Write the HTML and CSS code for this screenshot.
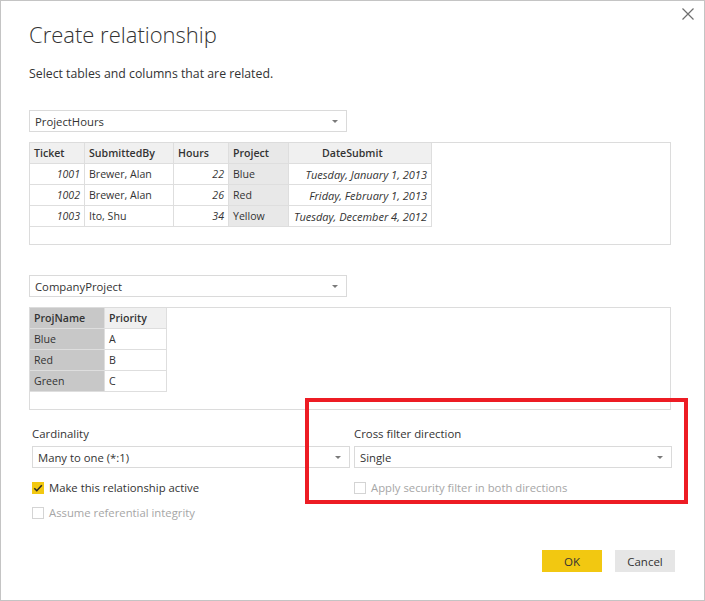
FILE: index.html
```html
<!DOCTYPE html>
<html lang="en">
<head>
<meta charset="utf-8">
<title>Create relationship</title>
<link rel="stylesheet" href="styles.css">
</head>
<body>
<div class="dialog">
  <button class="close" aria-label="Close">
    <svg width="12" height="12" viewBox="0 0 12 12"><path d="M0.5 0.5 L11.5 11.5 M11.5 0.5 L0.5 11.5" stroke="#6e6e6e" stroke-width="1.2" fill="none"/></svg>
  </button>
  <h1 class="title">Create relationship</h1>
  <p class="subtitle">Select tables and columns that are related.</p>

  <div class="select select-table"><span>ProjectHours</span><i class="caret"></i></div>
  <div class="panel">
    <table class="grid grid-hours">
      <colgroup><col style="width:55px"><col style="width:89px"><col style="width:55px"><col style="width:60px"><col style="width:143px"></colgroup>
      <thead>
        <tr><th>Ticket</th><th>SubmittedBy</th><th>Hours</th><th class="sel">Project</th><th class="date-h">DateSubmit</th></tr>
      </thead>
      <tbody>
        <tr><td class="num">1001</td><td>Brewer, Alan</td><td class="num">22</td><td class="sel">Blue</td><td class="num date">Tuesday, January 1, 2013</td></tr>
        <tr><td class="num">1002</td><td>Brewer, Alan</td><td class="num">26</td><td class="sel">Red</td><td class="num date">Friday, February 1, 2013</td></tr>
        <tr><td class="num">1003</td><td>Ito, Shu</td><td class="num">34</td><td class="sel">Yellow</td><td class="num date">Tuesday, December 4, 2012</td></tr>
      </tbody>
    </table>
  </div>

  <div class="select select-table second"><span>CompanyProject</span><i class="caret"></i></div>
  <div class="panel">
    <table class="grid grid-project">
      <colgroup><col style="width:75px"><col style="width:62px"></colgroup>
      <thead>
        <tr><th class="sel2">ProjName</th><th>Priority</th></tr>
      </thead>
      <tbody>
        <tr><td class="sel2">Blue</td><td>A</td></tr>
        <tr><td class="sel2">Red</td><td>B</td></tr>
        <tr><td class="sel2">Green</td><td>C</td></tr>
      </tbody>
    </table>
  </div>

  <div class="options">
    <div class="col">
      <label class="field-label">Cardinality</label>
      <div class="select"><span>Many to one (*:1)</span><i class="caret"></i></div>
      <div class="check-row">
        <span class="box checked"><svg width="12" height="12" viewBox="0 0 12 12"><path d="M2.3 6.2 L4.8 8.7 L9.8 3.2" stroke="#2b2b2b" stroke-width="1.6" fill="none"/></svg></span>
        <span class="check-label">Make this relationship active</span>
      </div>
      <div class="check-row disabled">
        <span class="box"></span>
        <span class="check-label">Assume referential integrity</span>
      </div>
    </div>
    <div class="col">
      <label class="field-label">Cross filter direction</label>
      <div class="select"><span>Single</span><i class="caret"></i></div>
      <div class="check-row disabled">
        <span class="box"></span>
        <span class="check-label">Apply security filter in both directions</span>
      </div>
    </div>
  </div>

  <div class="footer">
    <button class="btn primary">OK</button>
    <button class="btn">Cancel</button>
  </div>

  <div class="highlight"></div>
</div>
</body>
</html>
```
FILE: styles.css
```css
html, body {
  margin: 0;
  padding: 0;
  background: #ffffff;
}

body {
  font-family: "Open Sans", "Noto Sans", "Liberation Sans", sans-serif;
  color: #333333;
}

.dialog {
  position: relative;
  box-sizing: border-box;
  width: 705px;
  height: 601px;
  border: 1px solid #c4c4c4;
  padding: 0 28px;
  display: flex;
  flex-direction: column;
  align-items: flex-start;
}

.close {
  position: absolute;
  top: 7px;
  right: 10px;
  width: 12px;
  height: 12px;
  padding: 0;
  border: 0;
  background: none;
  display: flex;
}

.title {
  margin: 17px 0 0;
  font-weight: 300;
  font-size: 22px;
  line-height: 32px;
  color: #333333;
}

.subtitle {
  margin: 16px 0 0;
  font-size: 12.3px;
  line-height: 16px;
  color: #333333;
}

.select {
  box-sizing: border-box;
  height: 22px;
  width: 318px;
  border: 1px solid #dadada;
  display: flex;
  align-items: center;
  justify-content: space-between;
  padding: 0 8px 0 5px;
  font-size: 11.3px;
  color: #333333;
}

.select-table {
  margin-top: 28px;
}

.select-table.second {
  margin-top: 30px;
}

.caret {
  width: 0;
  height: 0;
  border-left: 3px solid transparent;
  border-right: 3px solid transparent;
  border-top: 3px solid #7a7a7a;
}

.panel {
  box-sizing: border-box;
  margin-top: 10px;
  width: 642px;
  height: 103px;
  border: 1px solid #dcdcdc;
}

.grid {
  border-collapse: separate;
  border-spacing: 0;
  table-layout: fixed;
  font-size: 10.6px;
  color: #333333;
}

.grid-hours {
  width: 402px;
}

.grid-project {
  width: 137px;
}

.grid th, .grid td {
  box-sizing: border-box;
  height: 21px;
  padding: 0 4px;
  border-right: 1px solid #dedede;
  border-bottom: 1px solid #dedede;
  text-align: left;
  white-space: nowrap;
  overflow: hidden;
}

.grid th {
  background: #f0f0f0;
  font-weight: 600;
}

.grid th.date-h {
  padding-left: 33px;
}

.grid td.num {
  text-align: right;
  font-style: italic;
}

.grid td.date {
  font-size: 11px;
}

.grid .sel {
  background: #e8e8e8;
}

.grid .sel2 {
  background: #c8c8c8;
}

.options {
  margin-top: 16px;
  margin-left: 3px;
  display: flex;
  gap: 4px;
}

.col {
  display: flex;
  flex-direction: column;
  width: 318px;
}

.field-label {
  font-size: 11.4px;
  line-height: 16px;
  color: #333333;
}

.col .select {
  margin-top: 4px;
}

.check-row {
  margin-top: 14px;
  display: flex;
  align-items: center;
  gap: 5px;
  height: 12px;
  font-size: 11.3px;
}

.check-row + .check-row {
  margin-top: 13px;
}

.box {
  box-sizing: border-box;
  width: 12px;
  height: 12px;
  border: 1px solid #d4d4d4;
  background: #ffffff;
  display: flex;
}

.box.checked {
  border: 0;
  background: #f2c811;
}

.check-row.disabled .check-label {
  color: #a6a6a6;
}

.check-row .check-label {
  color: #333333;
  line-height: 16px;
}

.footer {
  margin-top: auto;
  margin-bottom: 28px;
  align-self: flex-end;
  margin-right: 1px;
  display: flex;
  gap: 13px;
}

.btn {
  width: 60px;
  height: 22px;
  border: 0;
  padding: 0;
  background: #e6e6e6;
  font-family: inherit;
  font-size: 11.5px;
  color: #333333;
}

.btn.primary {
  background: #f2c811;
}

.highlight {
  position: absolute;
  left: 304px;
  top: 397px;
  width: 375px;
  height: 98px;
  border: 4px solid #ed1c24;
}
```
